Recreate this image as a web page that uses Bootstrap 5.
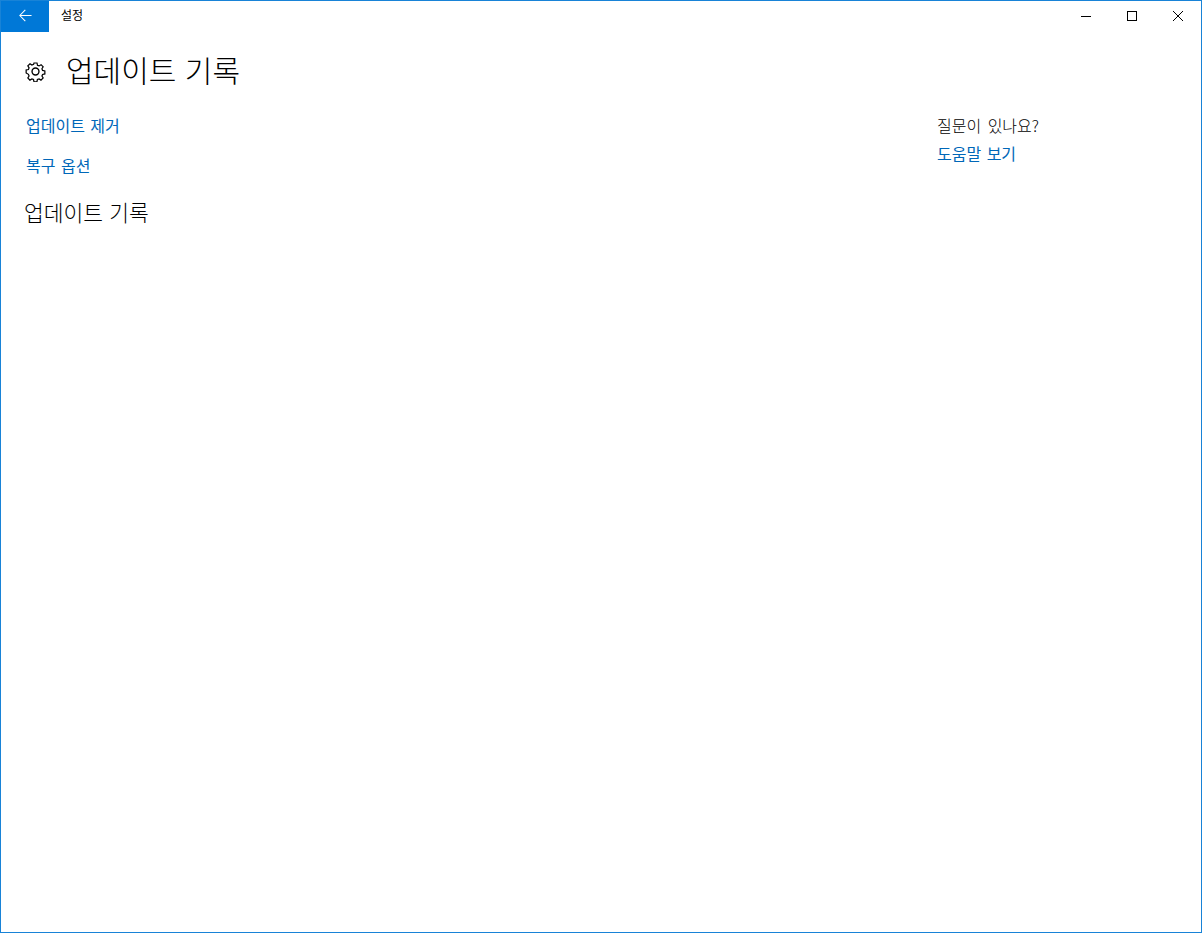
<!DOCTYPE html>
<html lang="ko">
  <head>
    <meta charset="UTF-8" />
    <title>설정</title>
    <link href="https://cdn.jsdelivr.net/npm/bootstrap@5.3.0/dist/css/bootstrap.min.css" rel="stylesheet" />
    <style>
      html, body { height: 100%; }
      body {
        font-family: "Noto Sans CJK KR", "Liberation Sans", sans-serif;
        font-size: 16px;
        font-weight: 300;
        color: #000;
        overflow: hidden;
      }
      .app-window { height: 933px; border: 1px solid #1883d7; }
      .title-bar { height: 31px; }
      .back-btn {
        width: 48px;
        background: #0078d7;
        border: 0;
        border-radius: 0;
        padding: 0 0 2px;
      }
      .back-btn:hover { background: #0078d7; }
      .app-title { font-size: 12px; font-weight: 400; padding-left: 12px; line-height: 28px; }
      .win-btn { width: 46px; height: 30px; border: 0; background: none; padding: 0; }
      .page-wrap { padding: 0 24px 0 23px; }
      .page-head { height: 82px; padding-bottom: 3px; }
      .gear-icon { margin-left: 1px; }
      .page-title { font-size: 30px; font-weight: 300; margin: 0 0 6px 20px; line-height: 40px; }
      .main-link { color: #0067b8; text-decoration: none; line-height: 22px; display: block; font-weight: 400; word-spacing: 1px; }
      .first-col { padding-left: 2px; }
      .gap-link { margin-top: 18px; }
      .sect-title { font-size: 21.5px; font-weight: 300; line-height: 28px; margin: 22px 0 0 -2px; }
      .help-col { width: 240px; }
      .help-q { line-height: 22px; margin: 0 0 6px; word-spacing: 2px; }
    </style>
  </head>

  <body>
    <div class="app-window d-flex flex-column">
      <div class="title-bar d-flex align-items-stretch">
        <button type="button" class="btn back-btn d-flex align-items-center justify-content-center">
          <svg width="13" height="13" viewBox="0 0 14 14" fill="none" stroke="#fff" stroke-width="1.100">
            <path d="M13.500 7H1M6.800 1 .9 7l5.900 6" />
          </svg>
        </button>
        <div class="app-title">설정</div>
        <div class="ms-auto d-flex">
          <button type="button" class="win-btn d-flex align-items-center justify-content-center">
            <svg width="10" height="10" viewBox="0 0 10 10" fill="none" stroke="#000"><path d="M0 5.500h10" /></svg>
          </button>
          <button type="button" class="win-btn d-flex align-items-center justify-content-center">
            <svg width="10" height="10" viewBox="0 0 10 10" fill="none" stroke="#000"><rect x=".5" y=".5" width="9" height="9" /></svg>
          </button>
          <button type="button" class="win-btn d-flex align-items-center justify-content-center">
            <svg width="10" height="10" viewBox="0 0 10 10" fill="none" stroke="#000"><path d="M0 0l10 10M10 0 0 10" /></svg>
          </button>
        </div>
      </div>

      <div class="page-wrap flex-grow-1">
        <div class="page-head d-flex align-items-center">
          <svg class="gear-icon" width="21" height="21" viewBox="0 0 20 20" fill="none" stroke="#000" stroke-width="1.300">
            <circle cx="10" cy="10" r="3.300" />
            <path d="M8.400 1h3.200l.5 2.400 1.700.7 2.100-1.300 2.200 2.300-1.300 2 .7 1.800 2.400.5v3.200l-2.400.5-.7 1.700 1.300 2.100-2.300 2.200-2-1.300-1.800.7-.5 2.400H8.400l-.5-2.400-1.700-.7-2.100 1.300-2.200-2.300 1.300-2-.7-1.800L.1 11.600V8.400l2.400-.5.700-1.700-1.300-2.100 2.300-2.200 2 1.300 1.800-.7z" transform="translate(1 1) scale(.9)" />
          </svg>
          <h1 class="page-title">업데이트 기록</h1>
        </div>

        <div class="d-flex justify-content-between">
          <div class="first-col">
            <a href="#" class="main-link">업데이트 제거</a>
            <a href="#" class="main-link gap-link">복구 옵션</a>
            <h2 class="sect-title">업데이트 기록</h2>
          </div>
          <div class="help-col">
            <p class="help-q">질문이 있나요?</p>
            <a href="#" class="main-link">도움말 보기</a>
          </div>
        </div>
      </div>
    </div>
    <script src="https://cdn.jsdelivr.net/npm/bootstrap@5.3.0/dist/js/bootstrap.bundle.min.js"></script>
  </body>
</html>
